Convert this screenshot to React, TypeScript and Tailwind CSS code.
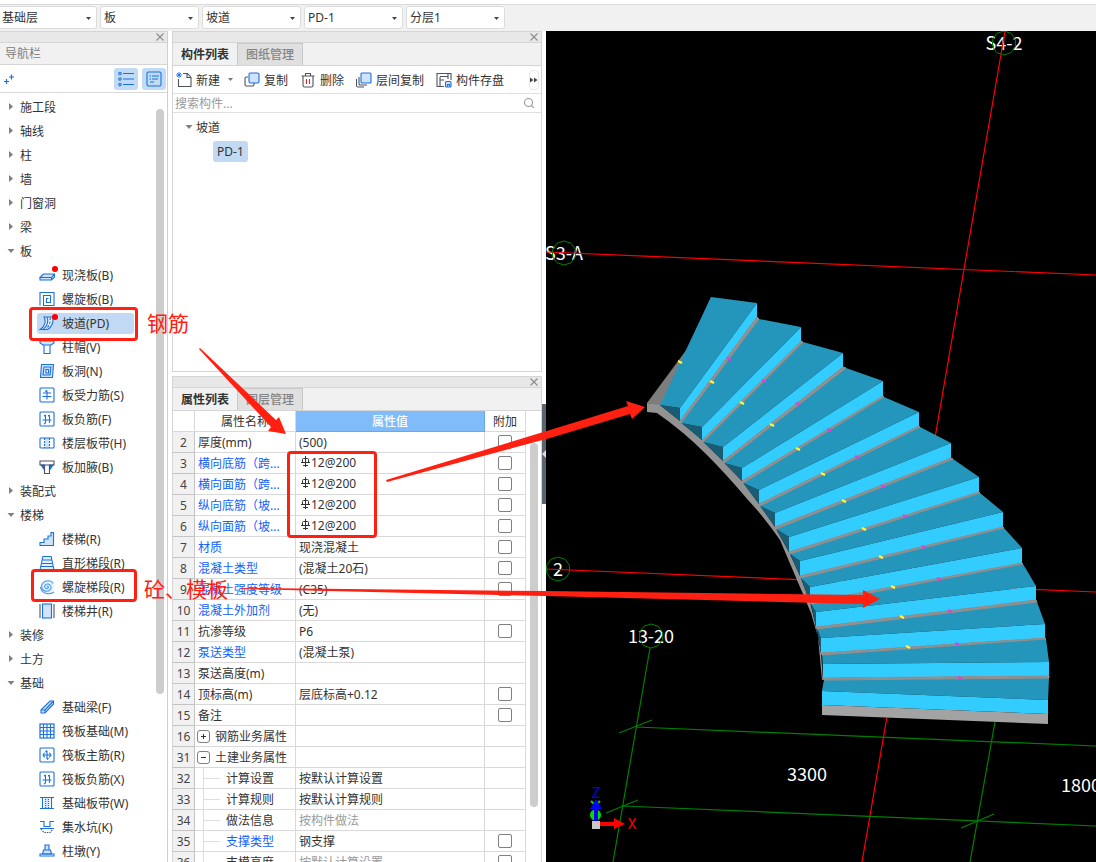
import type { ReactNode } from "react";

const BLUE = "#1a70dd";
const PALE = "#cfe3fa";

/* ---------- icons ---------- */

function Icon({ children, color = BLUE }: { children: ReactNode; color?: string }) {
  return (
    <svg viewBox="0 0 16 16" className="size-4 shrink-0" fill="none" stroke={color} strokeWidth="1.1">
      {children}
    </svg>
  );
}

const box = <rect x="1" y="1" width="14" height="14" rx="1" />;

const icons: Record<string, ReactNode> = {
  slab: <path d="M1 10.500 4.500 7h11L12.500 10.500zv2.500h11.500v-2.500M12.500 13l3-3V7" fill={PALE} />,
  spiralSlab: <path d="M1 14.500V1.500h14v13H4.500v-10h7v7H7.500v-4h2" />,
  ramp: (
    <>
      <path d="M5 2c2.500 4 .500 10-4 12.500h7.500C13 12 15 6.500 13.500 2z" fill="#e3effc" />
      <path d="M8 2c2 4 0 9.500-3.500 12" />
      <path d="M11 2.500c1 4-1 9-4 11.500" strokeDasharray="2.500 1.500" />
    </>
  ),
  cap: (
    <>
      <path d="M1 2h14v2l-3 2H4L1 4z" fill={PALE} />
      <path d="M5 6v8.500h6V6" />
    </>
  ),
  hole: (
    <>
      <path d="M2.500 1.500h12L13.500 14.500h-12z" fill={PALE} />
      <path d="M5 4h7l-1 8H4z" />
      <rect x="7" y="6.500" width="2.500" height="3.500" fill="#fff" />
    </>
  ),
  rebarS: (
    <>
      {box}
      <path d="M4 6h8M3.500 9.500h9M8 3.500v9M6 4.500l2-1" />
    </>
  ),
  rebarF: (
    <>
      {box}
      <path d="M3.500 9h9M6.500 4v8l-1.500 1M10.500 4v8M5 5l1.500-1M9 5l1.500-1" />
    </>
  ),
  strip: (
    <>
      <path d="M8 3v10" stroke={PALE} strokeWidth="4" />
      <rect x="1" y="3" width="14" height="10" rx="1" />
      <path d="M5.500 3v10M10.500 3v10" strokeDasharray="2 1" />
    </>
  ),
  haunch: (
    <>
      <path d="M2 6l3.500 5V6zM14 6l-3.500 5V6z" fill={BLUE} />
      <path d="M1 2h14v4H1zM5.500 6v8.500h5V6" stroke="#4c5561" />
    </>
  ),
  stairs: <path d="M1 14.500v-3h4v-3.500h4V5h3V1.500h2.500v13z" fill={PALE} />,
  flight: (
    <>
      <path d="M4 1h8l3 14H1z" fill="#e3effc" stroke="none" />
      <path d="M4 1 1 15M12 1l3 14M4 1.500h8M3.500 5h9M3 8.500h10M2 11.500h12M1 14.500h14" />
    </>
  ),
  spiralStair: (
    <>
      <circle cx="8" cy="8" r="7" fill="#e6f1fd" stroke="none" />
      <path
        d="M8 8c0-1 1.500-1 1.500.300C9.500 10 6 10.200 5.600 8 5.200 5.200 9 4 11 6c2.500 2.800 0 6.500-3.500 6.300C3 12 1.500 7.500 3.500 4.500 6 1 12 .700 14.300 4.500M1.500 8c.500 6.500 8.500 8.500 13.500 5"
        stroke="#4c9af0"
      />
    </>
  ),
  well: (
    <>
      <rect x="3.500" y="1" width="9" height="14" fill={PALE} />
      <path d="M1 1v14M15 1v14" stroke="#4c5561" />
    </>
  ),
  beam: (
    <>
      <path d="M2 11 11 2h3.500v3L6 14H2z" fill={PALE} />
      <path d="M2 11h4v3M6 11l8.500-9" />
    </>
  ),
  raft: (
    <>
      <rect x="1" y="1" width="14" height="14" strokeWidth="1.200" />
      <path d="M4.500 1v14M8 1v14M11.500 1v14M1 4.500h14M1 8h14M1 11.500h14" />
    </>
  ),
  raftMain: (
    <>
      {box}
      <path d="M3.500 8h9M8 4v8M6 6c-2 0-2 4 0 4M10 6c2 0 2 4 0 4M6.500 5 8 3.500M9.500 11 8 12.500" />
    </>
  ),
  baseStrip: (
    <>
      <path d="M8 3v10" stroke={PALE} strokeWidth="5" />
      <path d="M1 2.500h14M1 13.500h14M3.500 3v10M12.500 3v10" />
      <path d="M6.500 4v9M9.500 4v9" strokeDasharray="1 1" />
    </>
  ),
  sump: (
    <>
      <path d="M1 2.500h4v5h6v-5h4M1 9.500h14" />
      <path d="M2 10l3 3.500h6L14 10" stroke="#4c5561" strokeDasharray="1.500 1" />
    </>
  ),
  pier: (
    <>
      <path d="M6 2h4v5H6zM4.500 7h7l1 4h-9z" fill={PALE} />
      <path d="M1 11h14v2H1z" />
    </>
  ),
};

function CloseButton() {
  return (
    <button aria-label="关闭" className="flex size-3 items-center justify-center text-[#8c8c8c]">
      <svg viewBox="0 0 8 8" className="size-2" stroke="currentColor" strokeWidth="1.1">
        <path d="M.5.5l7 7M7.500.500l-7 7" />
      </svg>
    </button>
  );
}

function Caret({ open }: { open: boolean }) {
  return (
    <svg viewBox="0 0 8 8" className="size-2 shrink-0" fill="#808080">
      {open ? <path d="M.5 2h7L4 6z" /> : <path d="M2 0v7l4-3.500z" />}
    </svg>
  );
}

/* ---------- top bar ---------- */

function TopBar() {
  return (
    <header className="h-[31px] shrink-0 bg-white pt-1">
      <div className="flex h-[27px] gap-[3px] border-t border-[#d9d9d9] bg-[#f1f1f1] pt-px">
        {["基础层", "板", "坡道", "PD-1", "分层1"].map((label, i) => (
          <div
            key={label}
            className={`relative h-[23px] w-[99px] shrink-0 rounded-[3px] border border-[#dcdcdc] bg-white ${i === 0 ? "-ml-0.5" : ""}`}
          >
            <select aria-label={label} className="h-full w-full appearance-none bg-transparent pl-[3px] text-xs leading-5 outline-none">
              <option>{label}</option>
            </select>
            <svg viewBox="0 0 5 3" className="pointer-events-none absolute top-[10px] right-[5px] h-[3px] w-[5px]" fill="#444">
              <path d="M0 0h5L2.500 3z" />
            </svg>
          </div>
        ))}
      </div>
    </header>
  );
}

/* ---------- navigation ---------- */

type NavRow = { label: string; open?: boolean; icon?: string; dot?: boolean; active?: boolean };

const navRows: NavRow[] = [
  { label: "施工段" },
  { label: "轴线" },
  { label: "柱" },
  { label: "墙" },
  { label: "门窗洞" },
  { label: "梁" },
  { label: "板", open: true },
  { label: "现浇板(B)", icon: "slab", dot: true },
  { label: "螺旋板(B)", icon: "spiralSlab" },
  { label: "坡道(PD)", icon: "ramp", dot: true, active: true },
  { label: "柱帽(V)", icon: "cap" },
  { label: "板洞(N)", icon: "hole" },
  { label: "板受力筋(S)", icon: "rebarS" },
  { label: "板负筋(F)", icon: "rebarF" },
  { label: "楼层板带(H)", icon: "strip" },
  { label: "板加腋(B)", icon: "haunch" },
  { label: "装配式" },
  { label: "楼梯", open: true },
  { label: "楼梯(R)", icon: "stairs" },
  { label: "直形梯段(R)", icon: "flight" },
  { label: "螺旋梯段(R)", icon: "spiralStair" },
  { label: "楼梯井(R)", icon: "well" },
  { label: "装修" },
  { label: "土方" },
  { label: "基础", open: true },
  { label: "基础梁(F)", icon: "beam" },
  { label: "筏板基础(M)", icon: "raft" },
  { label: "筏板主筋(R)", icon: "raftMain" },
  { label: "筏板负筋(X)", icon: "rebarF" },
  { label: "基础板带(W)", icon: "baseStrip" },
  { label: "集水坑(K)", icon: "sump" },
  { label: "柱墩(Y)", icon: "pier" },
];

function NavPanel() {
  return (
    <nav className="flex w-[168px] shrink-0 flex-col border-r border-[#cfcfcf] bg-white">
      <div className="flex h-3 shrink-0 items-center justify-end border-y border-[#d5d5d5] bg-[#e8e8e8] pr-px">
        <CloseButton />
      </div>
      <h2 className="h-[22px] shrink-0 border-b border-[#d5d5d5] bg-[#f1f1f1] pt-0.5 pl-[5px] text-xs leading-[18px] text-[#808080]">导航栏</h2>
      <div className="flex h-7 shrink-0 items-center gap-1 border-b border-[#d9d9d9] pr-px pl-1">
        <button aria-label="添加" className="mr-auto">
          <svg viewBox="0 0 10 10" className="size-2.5" stroke={BLUE} strokeWidth="1.2">
            <path d="M0 7.500h5M2.500 5v5M5 3h5M7.500.500v5" />
          </svg>
        </button>
        <button aria-label="列表" className="flex h-[22px] w-6 items-center justify-center rounded-[3px] bg-[#c1dbf5]">
          <Icon>
            <circle cx="2" cy="2.500" r="1.200" />
            <circle cx="2" cy="8" r="1.200" />
            <circle cx="2" cy="13.500" r="1.200" />
            <path d="M5 2.500h11M5 8h11M5 13.500h11" />
          </Icon>
        </button>
        <button aria-label="详情" className="flex h-[22px] w-6 items-center justify-center rounded-[3px] bg-[#c1dbf5]">
          <Icon>
            <rect x="1" y="1" width="14" height="14" rx="1.500" />
            <path d="M6 5h7M3.500 5h1.500M6 8h6M3.500 8h1.500M4 11h4" />
          </Icon>
        </button>
      </div>
      <div className="flex min-h-0 flex-1 overflow-hidden pt-0.5 pr-[3px]">
        <ul className="min-w-0 flex-1">
          {navRows.map((row) =>
            row.icon ? (
              <li key={row.label} className="flex h-6 items-center pl-[37px]">
                <a
                  href="#"
                  className={`relative flex h-[21px] w-[97px] items-center gap-[7px] rounded-[3px] pl-0.5 whitespace-nowrap ${row.active ? "bg-[#c1d9f2]" : ""}`}
                >
                  <Icon>{icons[row.icon]}</Icon>
                  <span className="pt-0.5">{row.label}</span>
                  {row.dot && <i className="absolute top-px left-[15px] size-1.5 rounded-full bg-[#ff0000]" />}
                </a>
              </li>
            ) : (
              <li key={row.label} className="flex h-6 items-center gap-[5px] pl-[7px]">
                <Caret open={!!row.open} />
                <span className="pt-0.5">{row.label}</span>
              </li>
            )
          )}
        </ul>
        <div className="mt-3.5 h-[585px] w-2 shrink-0 rounded-full bg-[#cdcdcd]" />
      </div>
    </nav>
  );
}

/* ---------- component list ---------- */

function Tabs({ names }: { names: string[] }) {
  return (
    <>
      <div className="flex h-3 shrink-0 items-center justify-end border-y border-[#d5d5d5] bg-[#e8e8e8] pr-px">
        <CloseButton />
      </div>
      <div role="tablist" className="flex h-[23px] shrink-0 border-b border-[#d5d5d5] bg-[#f1f1f1]">
        {names.map((name, i) => (
          <button
            key={name}
            role="tab"
            aria-selected={i === 0}
            className={`w-[65px] border-r border-[#c8c8c8] ${i === 0 ? "bg-[#f1f1f1] pt-0.5 font-bold text-[#333]" : "border-t bg-[#e0e0e0] pt-px font-medium text-[#858585]"}`}
          >
            {name}
          </button>
        ))}
      </div>
    </>
  );
}

function Tool({ label, icon }: { label: string; icon: ReactNode }) {
  return (
    <button className="flex shrink-0 items-center gap-1">
      {icon}
      <span className="pt-0.5">{label}</span>
    </button>
  );
}

const GRAY = "#4c5561";

function ListPanel() {
  return (
    <section className="flex h-[341px] shrink-0 flex-col border-x border-b border-[#d5d5d5] bg-white">
      <Tabs names={["构件列表", "图纸管理"]} />
      <div className="flex h-7 shrink-0 items-center gap-3 border-b border-[#e0e0e0] pr-0.5 pl-[3px]">
        <div className="flex items-center gap-2">
          <Tool
            label="新建"
            icon={
              <Icon color={GRAY}>
                <path d="M7 1.500h4.500l3.500 4v9H2.500V7M11 1.500v4h4" />
                <path d="M1 1l4 4M5 1L1 5M3 0v6M0 3h6" stroke={BLUE} strokeWidth=".9" />
              </Icon>
            }
          />
          <svg viewBox="0 0 5 3" className="-mr-px h-[3px] w-[5px]" fill="#777">
            <path d="M0 0h5L2.500 3z" />
          </svg>
        </div>
        <Tool
          label="复制"
          icon={
            <Icon color={GRAY}>
              <path d="M4 5H2.500Q1 5 1 6.500v6Q1 14 2.500 14h6q1.500 0 1.500-1.500V11" />
              <rect x="5" y="1" width="10" height="10" rx="1.500" fill={PALE} stroke={BLUE} />
            </Icon>
          }
        />
        <Tool
          label="删除"
          icon={
            <Icon color={GRAY}>
              <path d="M1.500 4h13M5.500 4V1.500h5V4M3 4v9.500q0 1.500 1.500 1.500h7q1.500 0 1.500-1.500V4" />
              <path d="M6.500 7v5M9.500 7v5" stroke="#e02020" />
            </Icon>
          }
        />
        <Tool
          label="层间复制"
          icon={
            <Icon color={GRAY}>
              <path d="M3 5v7q0 1 1 1h7M.500 7v6.500q0 1.500 1.500 1.500h6" />
              <rect x="5" y="1" width="10" height="10" rx="1" fill={PALE} stroke={BLUE} />
            </Icon>
          }
        />
        <Tool
          label="构件存盘"
          icon={
            <Icon color={GRAY}>
              <path d="M8 14.500H1V1.500h14V8M4 14V5M4 4.500h8M4 8h4M12 1.500V7" />
              <rect x="9.500" y="9.500" width="5.500" height="5.500" rx="1" stroke={BLUE} fill={PALE} />
              <path d="M11.500 14.500v-2h2v2" stroke={BLUE} />
            </Icon>
          }
        />
        <button aria-label="更多" className="ml-auto flex h-5 w-2.5 items-center justify-center rounded border border-[#e8e8e8]">
          <svg viewBox="0 0 8 6" className="h-1.5 w-2 shrink-0" fill="#444">
            <path d="M0 .5v5l3.500-2.500zM4 .5v5l3.500-2.500z" />
          </svg>
        </button>
      </div>
      <div className="flex h-[19px] shrink-0 items-center border-b border-[#e0e0e0] pr-[7px] pl-0.5">
        <input
          aria-label="搜索构件"
          placeholder="搜索构件..."
          className="h-[18px] min-w-0 flex-1 bg-transparent text-xs outline-none placeholder:text-[#9a9a9a]"
        />
        <svg viewBox="0 0 10 10" className="size-2.5" fill="none" stroke="#999" strokeWidth="1.1">
          <circle cx="4.500" cy="4.500" r="4" />
          <path d="M7.500 7.500 10 10" />
        </svg>
      </div>
      <ul className="pt-0.5">
        <li className="flex h-6 items-center gap-[3px] pl-3">
          <Caret open />
          <span className="pt-0.5">坡道</span>
        </li>
        <li className="flex h-6 items-center pl-10">
          <span className="h-[21px] rounded-[3px] bg-[#c1d9f2] px-1 pt-px leading-5">PD-1</span>
        </li>
      </ul>
    </section>
  );
}

/* ---------- property table ---------- */

type Prop = {
  no: number;
  name: string;
  value?: string;
  check?: boolean;
  link?: boolean;
  rebar?: boolean;
  group?: "+" | "-";
  child?: boolean;
  muted?: boolean;
};

const props: Prop[] = [
  { no: 2, name: "厚度(mm)", value: "(500)", check: true },
  { no: 3, name: "横向底筋（跨...", value: "12@200", rebar: true, link: true, check: true },
  { no: 4, name: "横向面筋（跨...", value: "12@200", rebar: true, link: true, check: true },
  { no: 5, name: "纵向底筋（坡...", value: "12@200", rebar: true, link: true, check: true },
  { no: 6, name: "纵向面筋（坡...", value: "12@200", rebar: true, link: true, check: true },
  { no: 7, name: "材质", value: "现浇混凝土", link: true, check: true },
  { no: 8, name: "混凝土类型", value: "(混凝土20石)", link: true, check: true },
  { no: 9, name: "混凝土强度等级", value: "(C35)", link: true, check: true },
  { no: 10, name: "混凝土外加剂", value: "(无)", link: true },
  { no: 11, name: "抗渗等级", value: "P6", check: true },
  { no: 12, name: "泵送类型", value: "(混凝土泵)", link: true },
  { no: 13, name: "泵送高度(m)" },
  { no: 14, name: "顶标高(m)", value: "层底标高+0.12", check: true },
  { no: 15, name: "备注", check: true },
  { no: 16, name: "钢筋业务属性", group: "+" },
  { no: 31, name: "土建业务属性", group: "-" },
  { no: 32, name: "计算设置", value: "按默认计算设置", child: true },
  { no: 33, name: "计算规则", value: "按默认计算规则", child: true },
  { no: 34, name: "做法信息", value: "按构件做法", child: true, muted: true },
  { no: 35, name: "支撑类型", value: "钢支撑", child: true, link: true, check: true },
  { no: 36, name: "支模高度", value: "按默认计算设置", child: true, muted: true, check: true },
];

function RebarMark() {
  return (
    <svg viewBox="0 0 9 11" className="mr-px mb-1 ml-0.5 h-[11px] w-[9px]" fill="none" stroke="#333">
      <path d="M4.500 0v11M1.500 6V3.500q0-1 1-1h4q1 0 1 1V6M0 6.500h9M2 9.500h5" />
    </svg>
  );
}

function PropName({ row }: { row: Prop }) {
  if (row.group) {
    return (
      <div className="flex h-5 items-center gap-[5px] pl-0.5">
        <button aria-label={row.group === "+" ? "展开" : "收起"} className="flex size-[13px] items-center justify-center rounded-[3px] border border-[#808080]">
          <svg viewBox="0 0 5 5" className="size-[5px]" stroke="#333">
            <path d={row.group === "+" ? "M0 2.500h5M2.500 0v5" : "M0 2.500h5"} />
          </svg>
        </button>
        <span className="pt-0.5 leading-[18px]">{row.name}</span>
      </div>
    );
  }
  if (row.child) {
    return (
      <div className="ml-2 flex h-5 items-center gap-1.5 border-l border-[#dedede]">
        <span className="h-px w-4 bg-[#dedede]" />
        <span className={`pt-0.5 leading-[18px] ${row.link ? "text-[#1260ff]" : ""}`}>{row.name}</span>
      </div>
    );
  }
  return <div className={`pt-0.5 pl-[3px] leading-[18px] ${row.link ? "text-[#1260ff]" : ""}`}>{row.name}</div>;
}

function PropPanel() {
  return (
    <section className="flex min-h-0 flex-1 flex-col border-x border-[#d5d5d5] bg-white">
      <Tabs names={["属性列表", "图层管理"]} />
      <div className="flex min-h-0 flex-1 overflow-hidden">
        <table className="w-[353px] shrink-0 table-fixed border-separate border-spacing-0 self-start leading-[18px]">
          <colgroup>
            <col className="w-[22px]" />
            <col className="w-[101px]" />
            <col />
            <col className="w-[41px]" />
          </colgroup>
          <thead>
            <tr className="h-[21px]">
              <th className="border-r border-b border-[#d9d9d9] p-0" />
              <th className="border-r border-b border-[#d9d9d9] p-0 pt-0.5 font-normal">属性名称</th>
              <th className="border-r border-b border-[#6ba6e8] bg-[#80bbfa] p-0 pt-0.5 font-medium text-white">属性值</th>
              <th className="border-r border-b border-[#d9d9d9] p-0 pt-0.5 font-normal">附加</th>
            </tr>
          </thead>
          <tbody>
            {props.map((row) => (
              <tr key={row.no} className="h-[21px]">
                <td className="border-r border-b border-[#c4c4c4] bg-[#f1f1f1] p-0 pt-0.5 text-center text-[#444]">{row.no}</td>
                <td className="overflow-hidden border-r border-b border-[#d9d9d9] p-0 whitespace-nowrap">
                  <PropName row={row} />
                </td>
                <td className={`border-r border-b border-[#d9d9d9] p-0 pl-[3px] ${row.muted ? "text-[#9a9a9a]" : ""}`}>
                  <div className={`flex h-5 items-center ${row.rebar ? "" : "pt-0.5"}`}>
                    {row.rebar && <RebarMark />}
                    {row.value}
                  </div>
                </td>
                <td className="border-r border-b border-[#d9d9d9] p-0">
                  {row.check && (
                    <input
                      type="checkbox"
                      aria-label={`${row.name} 附加`}
                      className="mx-auto block size-3.5 appearance-none rounded-[2px] border border-[#808080] bg-white"
                    />
                  )}
                </td>
              </tr>
            ))}
          </tbody>
        </table>
        <div className="mt-8 ml-1 h-[364px] w-2 shrink-0 rounded-full bg-[#cdcdcd]" />
      </div>
    </section>
  );
}

/* ---------- 3D view ---------- */

// outer-left, outer-right, riser foot (outer), inner x, inner top, inner foot
const steps = [
  [711, 297, 757, 303, 317, 680, 408, 421],
  [759, 319, 801, 327, 341, 702, 427, 440],
  [803, 342, 843, 353, 367, 723, 447, 461],
  [846, 368, 883, 381, 396, 742, 468, 481],
  [884, 397, 919, 412, 426, 759, 490, 504],
  [920, 427, 951, 443, 458, 775, 513, 527],
  [953, 459, 979, 477, 492, 789, 537, 552],
  [980, 493, 1003, 512, 527, 800, 561, 576],
  [1004, 528, 1022, 548, 563, 810, 587, 602],
  [1023, 564, 1036, 586, 600, 816, 612, 627],
  [1037, 602, 1045, 624, 638, 821, 638, 653],
  [1046, 639, 1049, 662, 676, 823, 664, 678],
  [1049, 678, 1048, 700, 714, 822, 691, 705],
];

const yellowDots = [
  [680, 362], [712, 382], [742, 403], [772, 425], [798, 449], [823, 474], [844, 501],
  [864, 529], [881, 557], [893, 587], [902, 617], [908, 647],
];

const pinkDots = [
  [729, 359], [764, 381], [798, 404], [829, 430], [857, 457], [883, 486], [905, 516],
  [924, 547], [939, 579], [950, 611], [957, 644], [960, 678],
];

function AxisBubble({ x, y }: { x: number; y: number }) {
  const pts = Array.from({ length: 10 }, (_, i) => {
    const a = (i * Math.PI) / 5 - Math.PI / 2;
    return `${x + 12 * Math.cos(a)},${y + 12 * Math.sin(a)}`;
  }).join(" ");
  return <polygon points={pts} fill="none" stroke="#008000" />;
}

function Stairs() {
  return (
    <g>
      <polygon points="647,403 690,345 711,297 690,360 660,406" fill="#7d7d7d" />
      <path
        d="M647 403 660 405 680 421 702 440 723 461 742 481 759 504 775 527 789 552 800 576 810 602 816 627 821 653 823 680 822 680 818 637 811 613 797 580 780 540Q765 518 748 500 727 475 707 455 683 431 657 413L647 412z"
        fill="#929292"
      />
      {steps.map(([ax, ay, bx, by, foot, ix, iy, ifoot], i) => {
        const prev = steps[i - 1];
        const next = steps[i + 1];
        const lx = prev ? prev[5] + 1 : 660;
        const ly = prev ? prev[7] + 2 : 405;
        return (
          <g key={i}>
            <polygon points={`${lx},${ly} ${ix},${iy} ${ix},${ifoot}`} fill="#1a5c73" />
            <polygon points={`${lx},${ly} ${ax},${ay} ${bx},${by} ${ix},${iy}`} fill="#2596bb" />
            <polygon points={`${bx},${by} ${bx},${foot} ${ix},${ifoot} ${ix},${iy}`} fill="#33ccff" />
          </g>
        );
      })}
      {steps.slice(0, -1).map(([, , bx, , foot, ix, , ifoot], i) => (
        <polygon
          key={i}
          points={`${bx},${foot} ${steps[i + 1][0]},${steps[i + 1][1]} ${ix + 1},${ifoot + 2} ${ix},${ifoot}`}
          fill="#929292"
          stroke="#929292"
        />
      ))}
      <polygon points="822,705 1048,714 1048,724 822,715" fill="#a3a3a3" />
      {yellowDots.map(([x, y]) => (
        <path key={x} d={`M${x - 2} ${y - 1}l4 2`} stroke="#ffff33" strokeWidth="2" />
      ))}
      {pinkDots.map(([x, y]) => (
        <path key={x} d={`M${x - 2} ${y - 1}l4 2`} stroke="#e33be3" strokeWidth="2" />
      ))}
    </g>
  );
}

function View3D() {
  return (
    <main className="min-w-0 flex-1 bg-black">
      <svg viewBox="546 31 550 831" preserveAspectRatio="xMinYMin slice" className="h-full w-full">
        <g fill="#fff" fontSize="18" className="font-['Noto_Sans_CJK_SC',sans-serif]">
          <text x="1004" y="50" textAnchor="middle">S4-2</text>
          <text x="564" y="260" textAnchor="middle">S3-A</text>
          <text x="558" y="576" textAnchor="middle">2</text>
          <text x="651" y="643" textAnchor="middle">13-20</text>
          <text x="807" y="781" textAnchor="middle">3300</text>
          <text x="1061" y="792">1800</text>
        </g>
        <g stroke="#ff0000" strokeWidth="1.2">
          <path d="M1005 31 862 862M546 252 1096 275M546 569 1096 592" />
        </g>
        <g stroke="#008000" strokeWidth="1.200">
          <path d="M650 648 613 862M995 722 970 862M636 727 1096 746M623 806 1096 826" />
          <path d="M619 733 652 720M606 813 638 800M961 828 994 814" />
        </g>
        <AxisBubble x={1004} y={43} />
        <AxisBubble x={564} y={253} />
        <AxisBubble x={558} y={569} />
        <AxisBubble x={651} y={636} />
        <Stairs />
        <g>
          <circle cx="595.500" cy="815" r="5.500" fill="#00e000" />
          <path d="M591 801l3 3M600 801l-3 3" stroke="#00e000" strokeWidth="2" />
          <path d="M594 822V809h-4l6-10 6 10h-4v13z" fill="#0000ff" />
          <path d="M600 822h14v-4l11 6-11 5v-3h-14z" fill="#ff0000" />
          <rect x="592" y="821" width="8" height="8" fill="#c8c8c8" />
          <text x="596" y="798" textAnchor="middle" fontSize="15" fill="#0000ff" className="font-['Noto_Sans_CJK_SC',sans-serif]">Z</text>
          <text x="632" y="829" textAnchor="middle" fontSize="15" fill="#ff0000" className="font-['Noto_Sans_CJK_SC',sans-serif]">X</text>
        </g>
      </svg>
    </main>
  );
}

/* ---------- red notes drawn over everything ---------- */

function Annotations() {
  return (
    <div className="pointer-events-none absolute inset-0 text-[21px] leading-6 text-[#ff2012]">
      <div className="absolute top-[307px] left-[29px] h-[34px] w-[109px] rounded border-3 border-[#ff2012]" />
      <div className="absolute top-[569px] left-[31px] h-[33px] w-[106px] rounded border-3 border-[#ff2012]" />
      <div className="absolute top-[451px] left-[287px] h-[87px] w-[90px] rounded border-3 border-[#ff2012]" />
      <span className="absolute top-[311px] left-[147px]">钢筋</span>
      <span className="absolute top-[577px] left-[144px]">砼、模板</span>
      <svg className="absolute inset-0 h-full w-full" fill="#ff2012">
        <path d="M200 348 276 420 279 417 286 434 268 431 271 427 199 349z" />
        <path d="M386 480 550 430 628 406 626 401 645 407 632 419 630 414 550 438 387 482z" />
        <path d="M242 588 546 591 780 594 863 595 863 590 880 599 863 608 863 604 780 602 546 596 242 589z" />
      </svg>
    </div>
  );
}

export default function App() {
  return (
    <div className="relative flex h-screen flex-col overflow-hidden bg-white font-['Noto_Sans','Noto_Sans_CJK_SC',sans-serif] text-xs text-[#333]">
      <TopBar />
      <div className="flex min-h-0 flex-1">
        <NavPanel />
        <div className="ml-1 flex w-[370px] shrink-0 flex-col gap-1">
          <ListPanel />
          <PropPanel />
        </div>
        <div className="flex w-1 shrink-0 items-center pt-3.5">
          <button aria-label="折叠" className="flex h-[100px] w-1 items-center bg-[#5b6572]">
            <svg viewBox="0 0 4 8" className="h-2 w-1" fill="#ddd">
              <path d="M4 0v8L0 4z" />
            </svg>
          </button>
        </div>
        <View3D />
      </div>
      <Annotations />
    </div>
  );
}
